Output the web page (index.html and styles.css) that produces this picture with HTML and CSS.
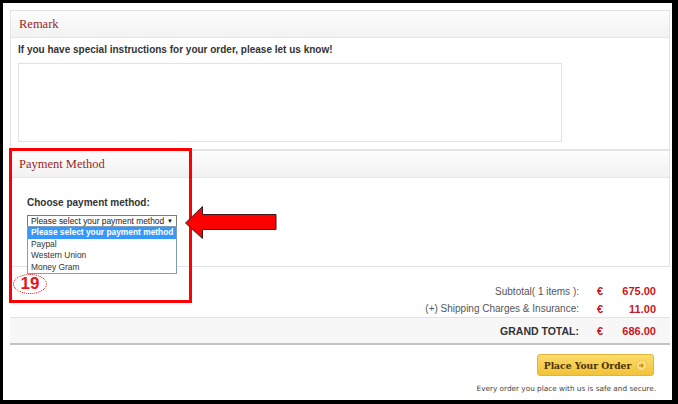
FILE: index.html
```html
<!DOCTYPE html>
<html>
<head>
<meta charset="utf-8">
<link rel="stylesheet" href="styles.css">
</head>
<body>
<div class="frame">
  <div class="panel">
    <div class="panel-head">Remark</div>
    <div class="panel-body remark-body">
      <div class="strong-text">If you have special instructions for your order, please let us know!</div>
      <div class="textarea"></div>
    </div>
  </div>
  <div class="panel">
    <div class="panel-head">Payment Method</div>
    <div class="panel-body pay-body">
      <div class="strong-text">Choose payment method:</div>
      <div class="select">
        <span>Please select your payment method</span>
        <span class="caret">&#9660;</span>
        <ul class="options">
          <li class="active">Please select your payment method</li>
          <li>Paypal</li>
          <li>Western Union</li>
          <li>Money Gram</li>
        </ul>
      </div>
    </div>
  </div>

  <div class="totals">
    <div class="trow"><span class="tlabel">Subtotal( 1 items ):</span><span class="euro">€</span><span class="amount">675.00</span></div>
    <div class="trow row2"><span class="tlabel">(+) Shipping Charges &amp; Insurance:</span><span class="euro">€</span><span class="amount">11.00</span></div>
    <div class="trow grand"><span class="tlabel">GRAND TOTAL:</span><span class="euro">€</span><span class="amount">686.00</span></div>
  </div>

  <div class="order">
    <div class="btn">Place Your Order
      <svg class="btn-ico" width="11" height="11" viewBox="0 0 11 11"><circle cx="5.5" cy="5.5" r="5" fill="#fbe38a" stroke="#f2c24a" stroke-width="1"/><path d="M3 4.4h2.3V2.6L8.2 5.5 5.3 8.4V6.6H3z" fill="#d9901a"/></svg>
    </div>
    <div class="secure">Every order you place with us is safe and secure.</div>
  </div>

  <div class="annot-box"></div>
  <div class="annot-num">19</div>
  <svg class="annot-arrow" width="96" height="38" viewBox="0 0 96 38">
    <path d="M2.5 19 L19.5 2.5 L19.5 10.5 L93 10.5 L93 25.5 L19.5 25.5 L19.5 34.5 Z" fill="#ff0000" stroke="#3a1a1a" stroke-width="1"/>
  </svg>
</div>
</body>
</html>
```
FILE: styles.css
```css
html, body {
  margin: 0;
  background: #000;
}
.frame {
  position: relative;
  margin: 3px 6px 0 3px;
  height: 397px;
  background: #fff;
  padding: 7px 2px 0 7px;
  box-sizing: border-box;
  font-family: "Liberation Sans", Arial, sans-serif;
  color: #333;
}
.panel {
  border: 1px solid #e3e3e3;
}
.panel-head {
  height: 26px;
  line-height: 26px;
  border-bottom: 1px solid #e6e6e6;
  background: linear-gradient(#fdfdfd, #f2f2f2);
  padding-left: 8px;
  font-family: "Liberation Serif", "Times New Roman", serif;
  font-size: 12.5px;
  color: #9a2626;
}
.panel-body {
  background: #fff;
}
.strong-text {
  font-weight: bold;
  font-size: 10px;
  line-height: 14px;
  color: #333;
}
.remark-body {
  padding: 5px 7px 7px 7px;
}
.textarea {
  margin-top: 6px;
  width: 544px;
  height: 79px;
  box-sizing: border-box;
  border: 1px solid #e2e2e2;
}
.pay-body {
  padding: 18px 16px 39px 16px;
}
.select {
  position: relative;
  margin-top: 5px;
  width: 150px;
  height: 12px;
  box-sizing: border-box;
  border: 1px solid #7a7a7a;
  font-size: 8.4px;
  line-height: 10px;
  padding-left: 3px;
  color: #222;
  display: flex;
  justify-content: space-between;
}
.caret {
  font-size: 6px;
  padding-right: 3px;
  color: #111;
}
.options {
  position: absolute;
  left: -1px;
  top: 10px;
  width: 150px;
  box-sizing: border-box;
  margin: 0;
  padding: 0;
  list-style: none;
  border: 1px solid #7f9db9;
  background: #fff;
  z-index: 2;
}
.options li {
  height: 11.5px;
  line-height: 11.5px;
  padding-left: 3px;
  color: #333;
}
.options li.active {
  background: #3399ff;
  color: #fff;
  font-weight: bold;
}
.totals {
  margin: 15px 0 0 0;
}
.trow {
  display: flex;
  justify-content: flex-end;
  align-items: center;
  padding-right: 14px;
  height: 18px;
  font-size: 10px;
  color: #555;
}
.trow.row2 {
  height: 17px;
}
.tlabel {
  margin-right: 18px;
}
.euro {
  width: 14px;
  font-weight: bold;
  color: #c8161d;
  font-size: 11px;
}
.amount {
  width: 45px;
  text-align: right;
  font-weight: bold;
  color: #c8161d;
  font-size: 11px;
}
.trow.grand {
  height: 25px;
  background: #f7f7f7;
  border-top: 1px solid #e2e2e2;
  border-bottom: 2px solid #c4c4c4;
}
.grand .tlabel {
  font-weight: bold;
  color: #333;
  font-size: 10.5px;
}
.order {
  display: flex;
  flex-direction: column;
  align-items: flex-end;
  padding-right: 14px;
}
.btn {
  margin-top: 9px;
  margin-right: 2px;
  width: 117px;
  height: 22px;
  box-sizing: border-box;
  border: 1px solid #e3b43a;
  border-radius: 3px;
  background: linear-gradient(#fbdc6a, #f2c238);
  display: flex;
  align-items: center;
  justify-content: center;
  gap: 5px;
  font-family: "DejaVu Serif", serif;
  font-weight: bold;
  font-size: 9.2px;
  color: #4a3005;
}
.btn-ico {
  display: block;
}
.secure {
  margin-top: 7px;
  font-family: "DejaVu Sans", Verdana, sans-serif;
  font-size: 7.3px;
  line-height: 12px;
  color: #444;
}
.annot-box {
  position: absolute;
  left: 6px;
  top: 145px;
  width: 183px;
  height: 155px;
  box-sizing: border-box;
  border: 3px solid #ff0000;
}
.annot-num {
  position: absolute;
  left: 10px;
  top: 271px;
  width: 34px;
  height: 20px;
  box-sizing: border-box;
  border: 1px dotted #e00000;
  border-radius: 50%;
  text-align: center;
  line-height: 18px;
  font-weight: bold;
  font-size: 17px;
  color: #e8141c;
}
.annot-arrow {
  position: absolute;
  left: 180px;
  top: 201px;
}
```
